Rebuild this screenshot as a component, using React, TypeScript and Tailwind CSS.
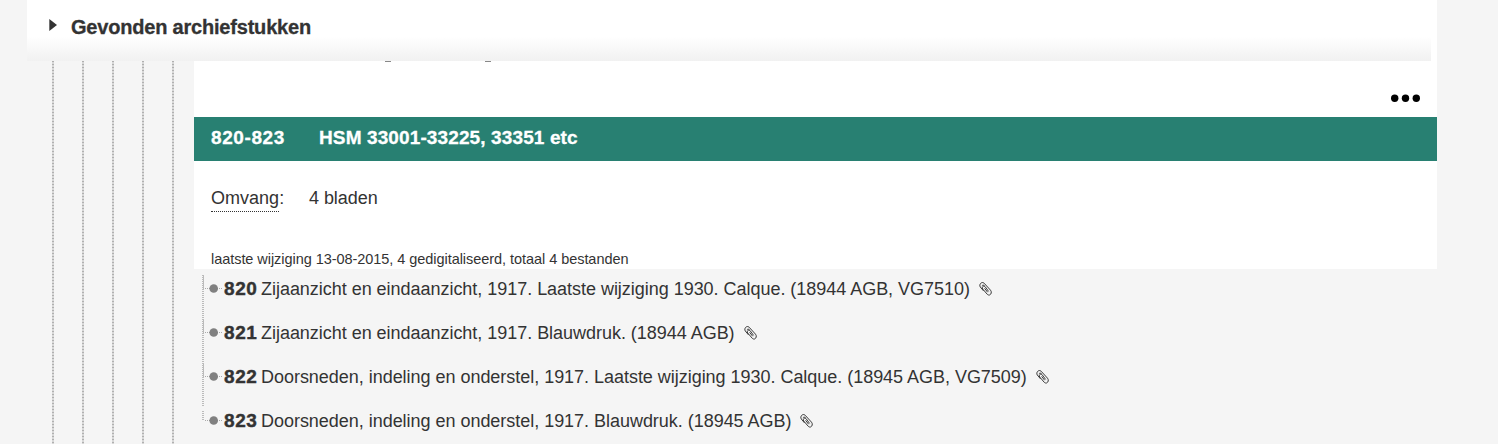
import React from 'react';

const items = [
  { code: '820', title: 'Zijaanzicht en eindaanzicht, 1917. Laatste wijziging 1930. Calque. (18944 AGB, VG7510)' },
  { code: '821', title: 'Zijaanzicht en eindaanzicht, 1917. Blauwdruk. (18944 AGB)' },
  { code: '822', title: 'Doorsneden, indeling en onderstel, 1917. Laatste wijziging 1930. Calque. (18945 AGB, VG7509)' },
  { code: '823', title: 'Doorsneden, indeling en onderstel, 1917. Blauwdruk. (18945 AGB)' },
];

const PaperclipIcon: React.FC = () => (
  <svg className="ml-[9px] h-3.5 w-[13px] shrink-0" viewBox="0 0 14 14" preserveAspectRatio="none" fill="none" stroke="#333" strokeWidth="1" strokeLinecap="round">
    <path d="M4.6 8.6 1.4 5C-.4 2.6 2.9-1 5.5 1.2l6.9 7c2.4 2.7-.8 6.6-3.6 4L4 7C2.6 5.2 4.9 3 6.5 4.6l3.6 4.5" />
    <path d="M3.4 3.6C4.2 2.8 5 3 5.8 3.8M6.3 6.6 9 9.9" />
  </svg>
);

const TreeBranch: React.FC<{ last: boolean }> = ({ last }) => (
  <svg className="h-11 w-[22px] shrink-0 overflow-visible" viewBox="0 0 22 44" fill="none">
    <path d={last ? 'M1 10V20' : 'M1 6V50'} stroke="#bbb" strokeWidth="2" strokeDasharray="1 1" />
    {!last && <path d="M1.5 6V20" stroke="#bbb" strokeWidth="1" />}
    <path d="M3 19.5H21" stroke="#aaa" strokeDasharray="1 1" />
    <circle cx="11.7" cy="19.5" r="4.3" fill="#808080" />
  </svg>
);

const Guides: React.FC = () => (
  <div className="flex w-[167px] shrink-0 gap-7 pl-[25px]">
    {[0, 1, 2, 3, 4].map((n) => (
      <div key={n} className="w-0.5 bg-[repeating-linear-gradient(#b0b0b0_0px_1px,#d8d8d8_1px_3px)]" />
    ))}
  </div>
);

export default function App() {
  return (
    <div className="flex h-[444px] flex-col overflow-hidden bg-[#f5f5f5] pr-[61px] pl-[27px] font-['Liberation_Sans',sans-serif] text-[#333]">
      <div className="h-[61px] shrink-0 bg-white pr-1.5">
        <header className="flex h-full items-center bg-linear-to-b from-white from-60% to-[#f1f1f1] pb-[7px] pl-[22px]">
          <svg className="-mt-1 h-3 w-2" viewBox="0 0 8 12">
            <path d="M.3 0 8 6 .3 12Z" fill="#333" />
          </svg>
          <h2 className="ml-3.5 text-xl font-bold tracking-[-0.2px] [-webkit-text-stroke:0.3px]">Gevonden archiefstukken</h2>
        </header>
      </div>
      <div className="flex flex-1">
        <Guides />
        <main className="min-w-0 flex-1 bg-[#f5f5f5]">
          <section className="h-[208px] bg-white">
            <div className="flex h-14 justify-between">
              <div className="flex gap-[94px] pl-[191px]">
                <span className="h-px w-1.5 bg-[#888]" />
                <span className="h-px w-1.5 bg-[#888]" />
              </div>
              <svg className="mt-[33px] mr-4 h-2 w-[31px]" viewBox="0 0 31 8">
                <circle cx="4.7" cy="4.3" r="3.7" />
                <circle cx="15.5" cy="4.3" r="3.7" />
                <circle cx="26.3" cy="4.3" r="3.7" />
              </svg>
            </div>
            <div className="flex h-11 items-center bg-[#288072] pb-0.5 pl-[17px] text-[19px] font-bold text-white [-webkit-text-stroke:0.3px]">
              <span className="w-[108px] tracking-[0.6px]">820-823</span>
              <span className="tracking-[0.12px]">HSM 33001-33225, 33351 etc</span>
            </div>
            <dl className="flex pt-6 pl-[17px] text-lg leading-[26px]">
              <dt className="w-[98px]">
                <span className="inline-block border-b border-dotted border-[#333] tracking-[0.02px]">Omvang</span>:
              </dt>
              <dd className="tracking-[-0.05px]">4 bladen</dd>
            </dl>
            <p className="pt-[37px] pl-[17px] text-[14.5px] leading-5 tracking-[-0.05px]">
              laatste wijziging 13-08-2015, 4 gedigitaliseerd, totaal 4 bestanden
            </p>
          </section>
          <ul className="pl-2">
            {items.map((item, i) => (
              <li key={item.code} className="flex h-11">
                <TreeBranch last={i === items.length - 1} />
                <div className="flex h-10 items-center text-lg whitespace-nowrap">
                  <b className="w-[37px] text-[19px] tracking-[0.6px] [-webkit-text-stroke:0.4px]">{item.code}</b>
                  <span className="tracking-[-0.03px]">{item.title}</span>
                  <PaperclipIcon />
                </div>
              </li>
            ))}
          </ul>
        </main>
      </div>
    </div>
  );
}
